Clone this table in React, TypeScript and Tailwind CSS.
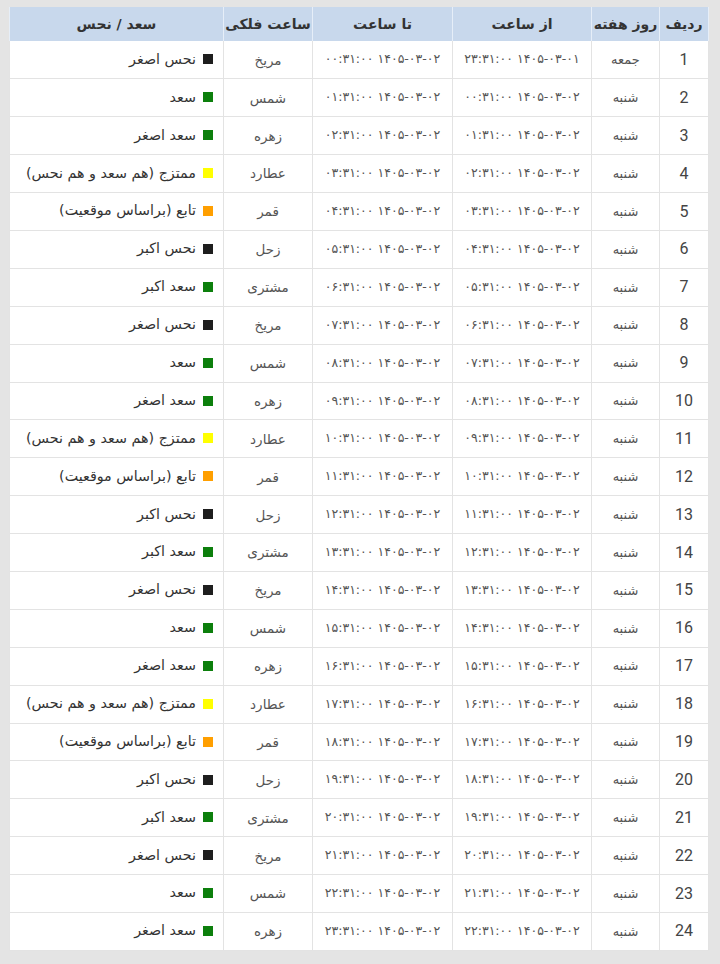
import React from "react";

const planets = ["مریخ", "شمس", "زهره", "عطارد", "قمر", "زحل", "مشتری"];

const status: Record<string, { label: string; color: string }> = {
    "مریخ": { label: "نحس اصغر", color: "bg-[#1e1e1e]" },
    "شمس": { label: "سعد", color: "bg-[#0c7f0c]" },
    "زهره": { label: "سعد اصغر", color: "bg-[#0c7f0c]" },
    "عطارد": { label: "ممتزج (هم سعد و هم نحس)", color: "bg-[#ffff00]" },
    "قمر": { label: "تابع (براساس موقعیت)", color: "bg-[#ff9f00]" },
    "زحل": { label: "نحس اکبر", color: "bg-[#1e1e1e]" },
    "مشتری": { label: "سعد اکبر", color: "bg-[#0c7f0c]" },
};

const toFa = (s: string) => s.replace(/\d/g, (d) => "۰۱۲۳۴۵۶۷۸۹"[Number(d)]);
const pad = (n: number) => String(n).padStart(2, "0");

const rows = Array.from({ length: 24 }, (_, i) => {
    const from = i === 0 ? "1405-03-01 23:31:00" : `1405-03-02 ${pad(i - 1)}:31:00`;
    const to = `1405-03-02 ${pad(i)}:31:00`;
    const planet = planets[i % 7];
    return {
        id: i + 1,
        day: i === 0 ? "جمعه" : "شنبه",
        from: toFa(from),
        to: toFa(to),
        planet,
        ...status[planet],
    };
});

const headers = [
    { label: "ردیف", w: "w-[49px]" },
    { label: "روز هفته", w: "w-[68px]" },
    { label: "از ساعت", w: "w-[139px]" },
    { label: "تا ساعت", w: "w-[140px]" },
    { label: "ساعت فلکی", w: "w-[89px]" },
    { label: "سعد / نحس", w: "" },
];

export default function App() {
    return (
        <div className="w-[720px] h-[964px] bg-[#e4e4e4] pt-[7px] pl-[9px] pr-[11px] font-['DejaVu_Sans',sans-serif]">
            <table dir="rtl" className="w-full border-collapse table-fixed bg-white text-[#333]">
                <thead>
                    <tr className="h-[34px] bg-[#c8d8ec]">
                        {headers.map((h) => (
                            <th
                                key={h.label}
                                className={`${h.w} border-x border-[#e6eef8] text-[14px] font-bold text-[#333] text-center`}
                            >
                                {h.label}
                            </th>
                        ))}
                    </tr>
                </thead>
                <tbody>
                    {rows.map((r) => (
                        <tr key={r.id} className="h-[37.9px] border-b border-[#e3e3e3]">
                            <td className="border-x border-[#e3e3e3] text-center text-[16px] font-['Roboto',sans-serif] text-[#444]">{r.id}</td>
                            <td className="border-x border-[#e3e3e3] text-center text-[13px] text-[#555]">{r.day}</td>
                            <td className="border-x border-[#e3e3e3] text-center text-[12.5px] text-[#555] whitespace-nowrap">{r.from}</td>
                            <td className="border-x border-[#e3e3e3] text-center text-[12.5px] text-[#555] whitespace-nowrap">{r.to}</td>
                            <td className="border-x border-[#e3e3e3] text-center text-[13.5px] text-[#555]">{r.planet}</td>
                            <td className="border-x border-[#e3e3e3] pr-[10px] text-[14.3px] text-[#333] whitespace-nowrap">
                                <span className="inline-flex items-center gap-[7px]">
                                    <span className={`w-[10px] h-[10px] ${r.color}`} />
                                    {r.label}
                                </span>
                            </td>
                        </tr>
                    ))}
                </tbody>
            </table>
        </div>
    );
}
